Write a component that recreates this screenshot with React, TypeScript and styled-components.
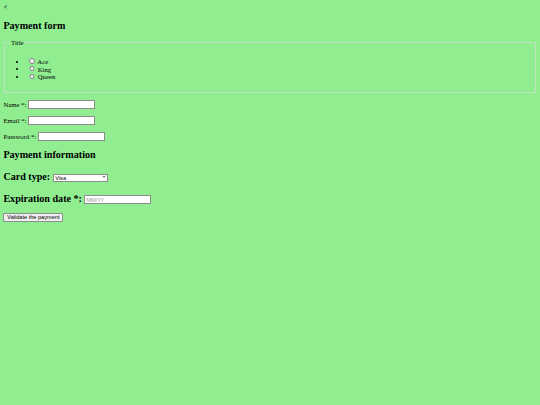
import React from "react";
import styled, { createGlobalStyle } from "styled-components";

// the whole page is a 1280px layout shown at 540px, so every default size is scaled by 0.42
const GlobalStyle = createGlobalStyle`
  html, body {
    background-color: #90ee90;
  }
  body {
    margin: 3.4px;
    font-family: "Liberation Serif", "Times New Roman", serif;
    font-size: 6.75px;
    color: #000;
  }
`;

const BackLink = styled.div`
  font-size: 6.75px;
  padding-bottom: 1.4px;
`;

const SectionTitle = styled.h3`
  font-size: 10.1px;
  font-weight: bold;
  margin: 8px 0 8.4px;
`;

const FieldTitle = styled.h2`
  font-size: 10.1px;
  font-weight: bold;
  margin: 11px 0 8.5px;
`;

const Fieldset = styled.fieldset`
  margin: 0 0.85px;
  padding: 3.4px 5px 4.7px;
  border: 1px solid #bde2bd;
  min-width: min-content;
`;

const Legend = styled.legend`
  padding: 0 0.85px;
`;

const OptionList = styled.ul`
  margin: 7.2px 0 7.5px;
  padding-left: 16.9px;
  list-style: disc;
`;

const Radio = styled.input`
  width: 5.5px;
  height: 5.5px;
  margin: 1.3px 1.3px 0 2.1px;
  vertical-align: baseline;
`;

const Row = styled.p`
  margin: 6.75px 0;
`;

const TextInput = styled.input`
  width: 67px;
  height: 9px;
  box-sizing: border-box;
  padding: 0.4px 0.85px;
  border: 1px solid #8c8c8c;
  border-radius: 0.5px;
  font-family: "Liberation Sans", Arial, sans-serif;
  font-size: 5.6px;
  background: #fff;
  vertical-align: baseline;
  &::placeholder {
    color: #9a9a9a;
  }
`;

const SelectWrap = styled.span`
  position: relative;
  display: inline-block;
  vertical-align: baseline;
  font-weight: normal;
`;

const CardSelect = styled.select`
  appearance: none;
  width: 55px;
  height: 8px;
  box-sizing: border-box;
  padding: 0 6px 0 1.5px;
  border: 1px solid #8c8c8c;
  border-radius: 0.5px;
  font-family: "Liberation Sans", Arial, sans-serif;
  font-size: 5.6px;
  line-height: 6px;
  color: #000;
  background: #fff;
  vertical-align: baseline;
`;

const Chevron = styled.svg`
  position: absolute;
  right: 2px;
  top: 50%;
  width: 4px;
  height: 3px;
  margin-top: -1.5px;
  pointer-events: none;
`;

const SubmitButton = styled.button`
  width: 60px;
  height: 9px;
  padding: 0 2.5px;
  box-sizing: border-box;
  border: 1px solid #8c8c8c;
  border-radius: 1px;
  background: #efefef;
  font-family: "Liberation Sans", Arial, sans-serif;
  font-size: 5.6px;
  line-height: 7px;
  color: #000;
`;

const titles = ["Ace", "King", "Queen"];

export default function App() {
  return (
    <>
      <GlobalStyle />
      <BackLink>&lt;</BackLink>
      <SectionTitle>Payment form</SectionTitle>
      <form onSubmit={(e) => e.preventDefault()}>
        <Fieldset>
          <Legend>Title</Legend>
          <OptionList>
            {titles.map((t) => (
              <li key={t}>
                <Radio type="radio" name="title" value={t} /> {t}
              </li>
            ))}
          </OptionList>
        </Fieldset>
        <Row>
          <label>Name *:</label> <TextInput type="text" />
        </Row>
        <Row>
          <label>Email *:</label> <TextInput type="email" />
        </Row>
        <Row>
          <label>Password *:</label> <TextInput type="password" />
        </Row>
        <SectionTitle>Payment information</SectionTitle>
        <FieldTitle>
          Card type:{" "}
          <SelectWrap>
            <CardSelect defaultValue="visa">
              <option value="visa">Visa</option>
              <option value="mastercard">Mastercard</option>
              <option value="amex">American Express</option>
            </CardSelect>
            <Chevron viewBox="0 0 8 6">
              <path d="M1 1.5 L4 4.5 L7 1.5" fill="none" stroke="#222" strokeWidth="1.6" />
            </Chevron>
          </SelectWrap>
        </FieldTitle>
        <FieldTitle>
          Expiration date *: <TextInput type="text" placeholder="MM/YY" />
        </FieldTitle>
        <SubmitButton type="submit">Validate the payment</SubmitButton>
      </form>
    </>
  );
}
